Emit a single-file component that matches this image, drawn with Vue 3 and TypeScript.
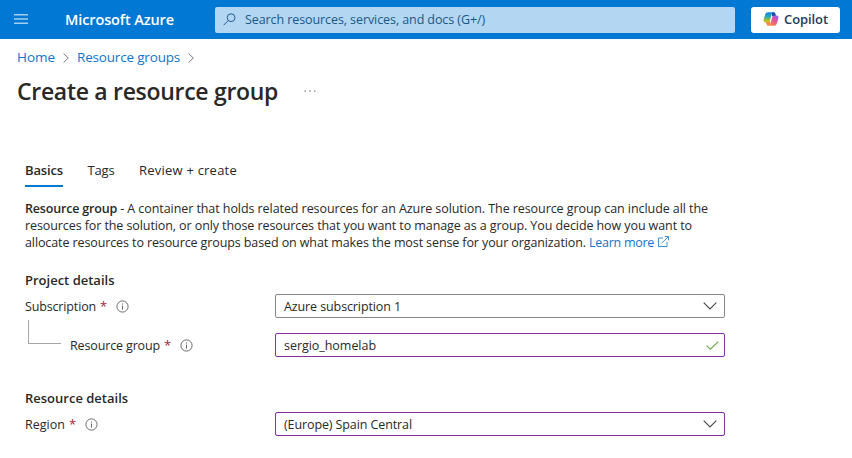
<script setup lang="ts">
import { ref } from 'vue'

interface Tab { id: string; label: string }

const tabs: Tab[] = [
  { id: 'basics', label: 'Basics' },
  { id: 'tags', label: 'Tags' },
  { id: 'review', label: 'Review + create' },
]
const activeTab = ref('basics')
const subscription = ref('Azure subscription 1')
const groupName = ref('sergio_homelab')
const region = ref('(Europe) Spain Central')
</script>

<template>
  <div class="portal">
    <header class="topbar">
      <svg class="menu" width="14" height="10" viewBox="0 0 14 10"><path d="M0 .700h14M0 5h14M0 9.300h14" /></svg>
      <span class="brand">Microsoft Azure</span>
      <div class="search">
        <svg width="13" height="13" viewBox="0 0 13 13"><circle cx="8.1" cy="4.7" r="3.9" /><path d="M5.2 7.6.6 12.2" /></svg>
        <span class="search-text">Search resources, services, and docs (G+/)</span>
      </div>
      <button class="copilot" type="button">
        <svg width="16" height="16" viewBox="0 0 16 16">
          <defs>
            <linearGradient id="cool" x1="0" y1="0" x2="0" y2="1">
              <stop offset="0" stop-color="#1785dc" /><stop offset=".4" stop-color="#20a5c5" /><stop offset=".68" stop-color="#7fba50" /><stop offset="1" stop-color="#f4c400" />
            </linearGradient>
            <linearGradient id="warm" x1=".8" y1="0" x2=".3" y2="1">
              <stop offset="0" stop-color="#9c5be8" /><stop offset=".45" stop-color="#e1579d" /><stop offset="1" stop-color="#fb8348" />
            </linearGradient>
          </defs>
          <path d="M9 1.200h1.600c.9 0 1.400.5 1.700 1.400l.8 2.400H9Z" fill="#1948a8" />
          <path d="M5.200 1.200h5.100c-.9.2-1.300.9-1.600 1.900L7 9.200c-.4 1.500-1 2.200-2.300 2.200H2.400C.7 11.400.2 10 .7 8.300l1.500-4.800C2.700 2 3.600 1.200 5.200 1.200Z" fill="url(#cool)" />
          <path d="M10.800 14.800H5.700c.9-.2 1.300-.9 1.600-1.900L9 6.800c.4-1.500 1-2.200 2.300-2.200h2.300c1.700 0 2.200 1.400 1.700 3.100l-1.500 4.800c-.5 1.500-1.400 2.300-3 2.300Z" fill="url(#warm)" />
          <path d="M6.500 14.800H5.400c-.9 0-1.400-.5-1.700-1.400l-.8-2.400h1.800c1 0 1.600-.4 2-1.300l.8 2.700Z" fill="#f58b45" />
        </svg>
        <span>Copilot</span>
      </button>
    </header>

    <nav class="crumbs">
      <a class="home">Home</a>
      <svg width="6" height="10" viewBox="0 0 6 10"><path d="M.6.5 5.300 5 .6 9.500" /></svg>
      <a class="groups">Resource groups</a>
      <svg width="6" height="10" viewBox="0 0 6 10"><path d="M.6.5 5.300 5 .6 9.500" /></svg>
    </nav>

    <div class="title-row">
      <h1>Create a resource group</h1>
      <svg width="12" height="2" viewBox="0 0 12 2"><path d="M.5 1h1.500M5.200 1h1.500M10 1h1.500" /></svg>
    </div>

    <main class="blade">
      <div class="tabs" role="tablist">
        <button
          v-for="tab in tabs"
          :key="tab.id"
          type="button"
          role="tab"
          :class="['tab', tab.id, { active: tab.id === activeTab }]"
          @click="activeTab = tab.id"
        >{{ tab.label }}</button>
      </div>

      <p class="intro">
        <b>Resource group</b> - A container that holds related resources for an Azure solution. The resource group can include all the<br>
        <span class="line2">resources for the solution, or only those resources that you want to manage as a group. You decide how you want to</span><br>
        <span class="line3">allocate resources to resource groups based on what makes the most sense for your organization.</span>
        <a class="learn">Learn more</a>
        <svg class="external" width="11" height="11" viewBox="0 0 11 11"><path d="M5 2H.5v8.500H9V6M3.700 7.200 10.200.7M6.700.5h3.800v3.800" /></svg>
      </p>

      <h2>Project details</h2>
      <div class="field">
        <div class="label">
          <span class="subscription">Subscription</span><span class="star">*</span>
          <svg class="info" width="13" height="13" viewBox="0 0 13 13"><circle cx="6.500" cy="6.500" r="5.600" /><path d="M6.500 5.600v4M6.500 3.400v1.200" /></svg>
        </div>
        <div class="box"><span>{{ subscription }}</span><svg width="14" height="8" viewBox="0 0 14 8"><path d="M.7.7 7 7 13.300.7" /></svg></div>
      </div>
      <div class="field nested">
        <div class="label">
          <i class="branch"></i>
          <span class="group-label">Resource group</span><span class="star">*</span>
          <svg class="info" width="13" height="13" viewBox="0 0 13 13"><circle cx="6.500" cy="6.500" r="5.600" /><path d="M6.500 5.600v4M6.500 3.400v1.200" /></svg>
        </div>
        <div class="box edited valid"><span class="name">{{ groupName }}</span><svg width="13" height="9" viewBox="0 0 13 9"><path d="M.6 4.700 4.300 8.200 12.300.6" /></svg></div>
      </div>

      <h2 class="second">Resource details</h2>
      <div class="field">
        <div class="label">
          <span>Region</span><span class="star">*</span>
          <svg class="info" width="13" height="13" viewBox="0 0 13 13"><circle cx="6.500" cy="6.500" r="5.600" /><path d="M6.500 5.600v4M6.500 3.400v1.200" /></svg>
        </div>
        <div class="box edited"><span>{{ region }}</span><svg width="14" height="8" viewBox="0 0 14 8"><path d="M.7.7 7 7 13.300.7" /></svg></div>
      </div>
    </main>
  </div>
</template>

<style>
body { background: #fff; }
</style>

<style scoped>
.portal {
  height: 458px;
  overflow: hidden;
  font-family: "Open Sans", "Noto Sans", sans-serif;
  font-size: 12.5px;
  color: #292827;
}
.portal * { box-sizing: border-box; }
svg { flex: none; fill: none; stroke-width: 1; }
button { border: 0; padding: 0; background: none; font: inherit; color: inherit; }

.topbar {
  display: flex;
  align-items: center;
  height: 39px;
  padding: 0 12px 0 14px;
  background: #0078d4;
}
.menu { margin-bottom: 1px; stroke: #a2ceef; stroke-width: 1.4; }
.brand {
  width: 150px;
  margin-left: 37px;
  font-size: 14.5px;
  font-weight: 600;
  letter-spacing: -0.115px;
  color: #fff;
  white-space: nowrap;
}
.search {
  display: flex;
  align-items: center;
  width: 520px;
  height: 26px;
  padding-left: 8px;
  background: #b3d6f2;
  border-radius: 2px;
}
.search svg { stroke: #245c91; }
.search-text {
  margin-left: 9px;
  padding-bottom: 1px;
  font-size: 12.5px;
  letter-spacing: -0.085px;
  color: #1b5686;
  white-space: nowrap;
}
.copilot {
  display: flex;
  align-items: center;
  width: 89px;
  height: 26px;
  margin-left: 16px;
  padding-left: 12px;
  gap: 5px;
  background: #fff;
  border-radius: 3px;
  font-size: 13px;
  font-weight: 600;
  letter-spacing: -0.08px;
  color: #243a5e;
}
.copilot span { padding-bottom: 2px; }
.copilot svg { margin-bottom: 1px; stroke: none; }

.crumbs {
  display: flex;
  align-items: center;
  height: 20px;
  margin-top: 8px;
  padding-left: 17px;
  font-size: 13.5px;
  color: #0f75ca;
}
.crumbs svg { margin: 2px 8px 0; stroke: #77787a; }
.home { letter-spacing: -0.04px; }
.groups { letter-spacing: -0.18px; }

.title-row {
  display: flex;
  align-items: center;
  height: 34px;
  margin-top: 7px;
  padding-left: 17px;
}
h1 {
  margin: 0;
  width: 287px;
  font-size: 23px;
  line-height: 34px;
  font-weight: 600;
  letter-spacing: -0.3px;
  white-space: nowrap;
}
.title-row svg { stroke: #605e5c; }

.blade { padding: 49px 0 0 25px; }
.tabs {
  display: flex;
  gap: 24px;
  height: 31px;
}
.tab {
  height: 30px;
  padding-bottom: 2px;
  border-bottom: 2px solid transparent;
  font-size: 13px;
  white-space: nowrap;
}
.tab.active {
  border-bottom-color: #0078d4;
  font-weight: 600;
}
.tab.basics { width: 38px; letter-spacing: -0.14px; }
.tab.tags { width: 28px; letter-spacing: -0.16px; }
.tab.review { letter-spacing: 0.22px; }

.intro {
  margin: 12px 0 0;
  line-height: 17px;
  letter-spacing: -0.071px;
  white-space: nowrap;
}
.intro b { font-weight: 600; letter-spacing: -0.183px; }
.line2 { letter-spacing: -0.09px; }
.line3 { letter-spacing: -0.105px; }
.learn { margin-left: 3px; color: #0f75ca; letter-spacing: -0.26px; }
.external { margin-left: 4px; stroke: #3f8fd2; vertical-align: 0; }

h2 {
  margin: 20px 0 5px;
  font-size: 13px;
  line-height: 18px;
  font-weight: 600;
}
h2.second { margin-top: 32px; }

.field {
  display: flex;
  align-items: center;
  height: 24px;
}
.nested { margin-top: 15px; }
.label {
  display: flex;
  align-items: center;
  width: 250px;
  height: 24px;
  white-space: nowrap;
}
.subscription { letter-spacing: -0.15px; }
.group-label { letter-spacing: -0.14px; }
.star { margin-left: 4px; color: #a4262c; font-size: 13px; }
.info { margin: 1px 0 0 8.5px; stroke: #6b6b6b; }
.branch {
  width: 33px;
  height: 24px;
  margin: -27px 9px 0 3px;
  border: solid #a6a6a6;
  border-width: 0 0 1px 1px;
}
.box {
  display: flex;
  align-items: center;
  justify-content: space-between;
  width: 450px;
  height: 24px;
  padding: 0 7px 0 8px;
  border: 1px solid #8a8886;
  border-radius: 2px;
  letter-spacing: -0.105px;
}
.box svg { stroke: #484644; stroke-width: 1.1; }
.box.edited { border-color: #8a2da5; }
.box.valid { padding-right: 5px; }
.box.valid svg { stroke: #68ab45; }
.name { letter-spacing: -0.04px; }
</style>
